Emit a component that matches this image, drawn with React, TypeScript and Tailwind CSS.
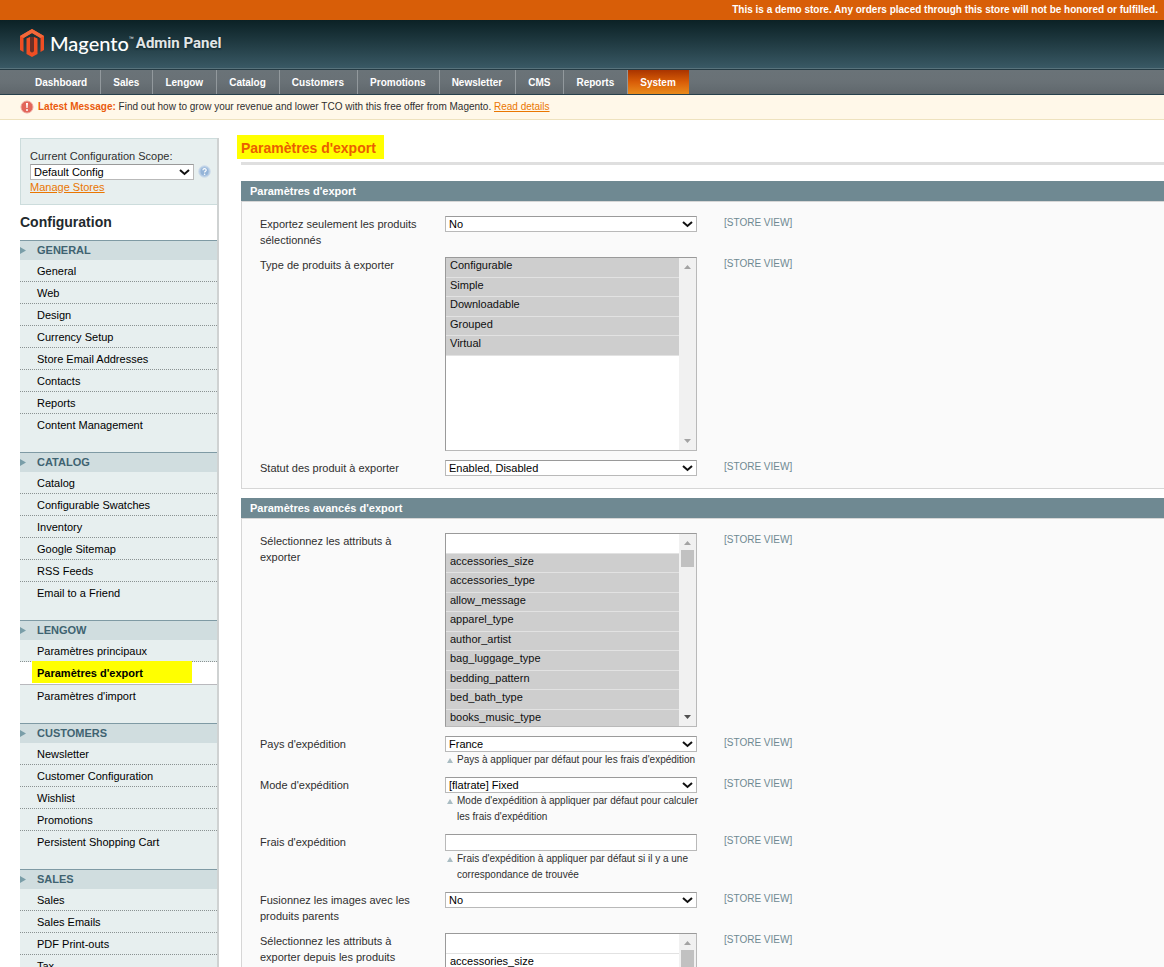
import type { ReactNode } from 'react'

const NAV = [
  'Dashboard',
  'Sales',
  'Lengow',
  'Catalog',
  'Customers',
  'Promotions',
  'Newsletter',
  'CMS',
  'Reports',
  'System',
]

const GROUPS = [
  {
    title: 'General',
    items: [
      'General',
      'Web',
      'Design',
      'Currency Setup',
      'Store Email Addresses',
      'Contacts',
      'Reports',
      'Content Management',
    ],
  },
  {
    title: 'Catalog',
    items: [
      'Catalog',
      'Configurable Swatches',
      'Inventory',
      'Google Sitemap',
      'RSS Feeds',
      'Email to a Friend',
    ],
  },
  {
    title: 'Lengow',
    items: ['Paramètres principaux', "Paramètres d'export", "Paramètres d'import"],
  },
  {
    title: 'Customers',
    items: [
      'Newsletter',
      'Customer Configuration',
      'Wishlist',
      'Promotions',
      'Persistent Shopping Cart',
    ],
  },
  {
    title: 'Sales',
    items: ['Sales', 'Sales Emails', 'PDF Print-outs', 'Tax'],
  },
]

const ACTIVE_ITEM = "Paramètres d'export"

const PRODUCT_TYPES = ['Configurable', 'Simple', 'Downloadable', 'Grouped', 'Virtual']

const ATTRIBUTES = [
  'accessories_size',
  'accessories_type',
  'allow_message',
  'apparel_type',
  'author_artist',
  'bag_luggage_type',
  'bedding_pattern',
  'bed_bath_type',
  'books_music_type',
]

export default function App() {
  return (
    <div className="h-screen overflow-hidden bg-white font-['Liberation_Sans',Arial,sans-serif] text-[11px] leading-4 text-[#2f2f2f]">
      <p className="h-5 bg-[#d85e08] px-[6px] text-right text-[10px] font-bold leading-5 text-white">
        This is a demo store. Any orders placed through this store will not be
        honored or fulfilled.
      </p>
      <Header />
      <Nav />
      <div className="flex h-[25px] items-center border-b border-[#eee2be] bg-[#fff8e9] px-5 text-[10px]">
        <AlertIcon />
        <p className="ml-1">
          <strong className="text-[#ea5b0c]">Latest Message:</strong> Find out how
          to grow your revenue and lower TCO with this free offer from Magento.{' '}
          <a href="#details" className="text-[#ea7601] underline">
            Read details
          </a>
        </p>
      </div>
      <div className="flex pl-5 pt-[18px]">
        <Sidebar />
        <main className="ml-[22px] min-w-0 flex-1">
          <div className="border-b-[3px] border-[#dfdfdf] pb-[3px]">
            <h1 className="-ml-1 -mt-[3px] inline-block bg-[#ff0] pl-1 pr-2 pt-[2px] align-top text-[14px] font-bold leading-[22px] text-[#eb5e00]">
              Paramètres d'export
            </h1>
          </div>
          <ExportSettings />
          <AdvancedSettings />
        </main>
      </div>
    </div>
  )
}

function Header() {
  return (
    <header className="flex h-[50px] items-center border-b border-[#253c45] bg-gradient-to-b from-[#0b2125] to-[#3a5a66] px-5 pb-[3px] shadow-[inset_0_-1px_0_#58737c]">
      <a href="#home" className="flex items-center" aria-label="Magento Admin Panel">
        <svg width="24" height="28" viewBox="0 0 24 28" aria-hidden="true">
          <path
            d="M12 0 0 7v14l3.500 2V9L12 4l8.500 5v14L24 21V7z"
            fill="#f04e23"
          />
          <path d="M12 0 0 7l3.500 2L12 4l8.500 5L24 7z" fill="#f2683a" />
          <path
            d="M6.500 9.500 10 8v14l2 1.500 2-1.500V8l3.500 1.500V25L12 28l-5.500-3z"
            fill="#f04e23"
          />
          <path d="M10 8v14l2 1.500 2-1.500V8" fill="#6b2f26" />
        </svg>
        <span className="ml-[6px] font-['Lato',sans-serif] text-[20px] font-medium leading-7 text-white">
          Magento
        </span>
        <span className="self-start text-[5px] leading-[18px] text-white">™</span>
        <span className="ml-[2px] font-['Roboto',sans-serif] text-[15px] font-bold leading-7 text-[#e2e6e7] [text-shadow:0_1px_2px_#0b2125]">
          Admin Panel
        </span>
      </a>
    </header>
  )
}

function Nav() {
  return (
    <nav className="flex h-[25px] border-b border-[#26404c] bg-gradient-to-b from-[#6a7378] via-[#697176] to-[#5f676c] pl-[23px] text-[10px] font-bold text-white">
      {NAV.map((label) =>
        label === 'System' ? (
          <a
            key={label}
            href="#system"
            aria-current="page"
            className="bg-gradient-to-b from-[#a93400] via-[#d95d08] to-[#e98b1b] pl-3 pr-[13px] leading-[25px]"
          >
            {label}
          </a>
        ) : (
          <a
            key={label}
            href="#section"
            className="border-r border-[#92999d] pl-3 pr-[13px] leading-[25px]"
          >
            {label}
          </a>
        ),
      )}
    </nav>
  )
}

function Sidebar() {
  return (
    <aside className="w-[199px] shrink-0 border-r-2 border-[#cfd2d2]">
      <div className="h-[67px] border border-r-0 border-[#ccdcdc] bg-[#e7efef] pl-[9px] pt-[9px]">
        <label htmlFor="scope" className="block">
          Current Configuration Scope:
        </label>
        <div className="flex h-[15px] items-center">
          <Dropdown id="scope" value="Default Config" width="w-[164px]" />
          <HelpIcon />
        </div>
        <a href="#stores" className="block text-[#ea7601] underline">
          Manage Stores
        </a>
      </div>
      <h3 className="h-[35px] text-[14px] font-bold leading-[34px] text-[#1f2a2e]">
        Configuration
      </h3>
      {GROUPS.map((group) => (
        <dl key={group.title} className="bg-[#e7efef] pb-4">
          <dt className="relative h-5 border-t border-[#7f9aa4] bg-[#d0dddf] pl-[17px] font-bold uppercase leading-[19px] text-[#3f6371]">
            <svg
              width="6"
              height="7"
              viewBox="0 0 6 7"
              className="absolute left-0 top-[6px]"
              aria-hidden="true"
            >
              <path d="M0 0 6 3.500 0 7z" fill="#7a9ea8" />
            </svg>
            {group.title}
          </dt>
          {group.items.map((item, i) => (
            <SidebarItem
              key={item}
              label={item}
              last={i === group.items.length - 1}
            />
          ))}
        </dl>
      ))}
    </aside>
  )
}

function SidebarItem({ label, last }: { label: string; last: boolean }) {
  if (label === ACTIVE_ITEM) {
    return (
      <dd className="relative h-[23px] border-b border-[#b9b9bd] bg-white text-black">
        <span className="absolute -top-px left-3 h-[22px] w-40 bg-[#ff0]" />
        <a href="#config" className="relative block pl-[17px] font-bold leading-[22px]">
          {label}
        </a>
      </dd>
    )
  }
  return (
    <dd
      className={
        last
          ? 'h-[22px] text-black'
          : 'h-[22px] border-b border-dotted border-[#8a9292] text-black'
      }
    >
      <a href="#config" className="block pl-[17px] leading-[22px]">
        {label}
      </a>
    </dd>
  )
}

function ExportSettings() {
  return (
    <Fieldset title="Paramètres d'export" className="mt-4">
      <Row id="only-selected" label="Exportez seulement les produits sélectionnés">
        <Dropdown id="only-selected" value="No" width="w-full" />
      </Row>
      <Row id="product-types" label="Type de produits à exporter">
        <ListBox id="product-types" options={PRODUCT_TYPES} selected={PRODUCT_TYPES} />
      </Row>
      <Row id="product-status" label="Statut des produit à exporter">
        <Dropdown id="product-status" value="Enabled, Disabled" width="w-full" />
      </Row>
    </Fieldset>
  )
}

function AdvancedSettings() {
  return (
    <Fieldset title="Paramètres avancés d'export" className="mt-[9px]">
      <Row id="attributes" label="Sélectionnez les attributs à exporter">
        <ListBox
          id="attributes"
          options={['', ...ATTRIBUTES]}
          selected={ATTRIBUTES}
          scrollable
        />
      </Row>
      <Row
        id="country"
        label="Pays d'expédition"
        note="Pays à appliquer par défaut pour les frais d'expédition"
      >
        <Dropdown id="country" value="France" width="w-full" />
      </Row>
      <Row
        id="carrier"
        label="Mode d'expédition"
        note="Mode d'expédition à appliquer par défaut pour calculer les frais d'expédition"
      >
        <Dropdown id="carrier" value="[flatrate] Fixed" width="w-full" />
      </Row>
      <Row
        id="shipping-price"
        label="Frais d'expédition"
        note="Frais d'expédition à appliquer par défaut si il y a une correspondance de trouvée"
      >
        <input
          id="shipping-price"
          type="text"
          className="block h-[17px] w-full border border-[#b9b9b9] border-t-[#9a9a9a] bg-white px-1"
        />
      </Row>
      <Row id="merge-images" label="Fusionnez les images avec les produits parents">
        <Dropdown id="merge-images" value="No" width="w-full" />
      </Row>
      <Row
        id="parent-attributes"
        label="Sélectionnez les attributs à exporter depuis les produits"
      >
        <ListBox
          id="parent-attributes"
          options={['', ...ATTRIBUTES]}
          selected={[]}
          scrollable
        />
      </Row>
    </Fieldset>
  )
}

type FieldsetProps = { title: string; className: string; children: ReactNode }

function Fieldset({ title, className, children }: FieldsetProps) {
  return (
    <section className={className}>
      <h2 className="h-5 bg-[#6f8992] pl-[9px] font-bold leading-5 text-white">
        {title}
      </h2>
      <div className="space-y-[9px] border border-r-0 border-[#d6d6d6] bg-[#fafafa] pb-3 pl-[18px] pt-[14px]">
        {children}
      </div>
    </section>
  )
}

type RowProps = { id: string; label: string; note?: string; children: ReactNode }

function Row({ id, label, note, children }: RowProps) {
  return (
    <div className="flex items-start">
      <div className="w-[185px] shrink-0 pr-5">
        <label htmlFor={id} className="block">
          {label}
        </label>
      </div>
      <div className="w-[252px] shrink-0">
        {children}
        {note && (
          <p className="relative -mr-3 pl-3 text-[10px]">
            <svg
              width="6"
              height="5"
              viewBox="0 0 6 5"
              className="absolute left-[2px] top-[6px]"
              aria-hidden="true"
            >
              <path d="M3 0 6 5H0z" fill="#a9bcc2" />
            </svg>
            {note}
          </p>
        )}
      </div>
      <span className="ml-[27px] text-[10px] leading-[14px] text-[#6f8992]">
        [STORE VIEW]
      </span>
    </div>
  )
}

function Dropdown({ id, value, width }: { id: string; value: string; width: string }) {
  return (
    <div className={`relative h-4 ${width}`}>
      <select
        id={id}
        defaultValue={value}
        className="block h-4 w-full appearance-none border border-[#b9b9b9] border-t-[#9a9a9a] bg-white pl-[3px] leading-[14px] text-black"
      >
        <option>{value}</option>
      </select>
      <svg
        width="11"
        height="7"
        viewBox="0 0 11 7"
        className="pointer-events-none absolute right-1 top-[5px]"
        aria-hidden="true"
      >
        <path d="m1 1 4.500 4L10 1" fill="none" stroke="#111" strokeWidth="2" />
      </svg>
    </div>
  )
}

type ListBoxProps = {
  id: string
  options: string[]
  selected: string[]
  scrollable?: boolean
}

function ListBox({ id, options, selected, scrollable }: ListBoxProps) {
  return (
    <div className="flex h-[194px] border border-[#b9b9b9] border-l-[#9a9a9a] border-t-[#9a9a9a] bg-white">
      <select
        id={id}
        multiple
        size={10}
        defaultValue={selected}
        className="block h-full min-w-0 flex-1 overflow-y-auto border-0 bg-white p-0 text-black [scrollbar-width:none]"
      >
        {options.map((option) => (
          <option
            key={option}
            value={option}
            className="h-[19px] border-b border-[#e2e2e2] px-1 pb-0 pt-px odd:h-5"
          >
            {option}
          </option>
        ))}
      </select>
      <div className="flex w-[17px] flex-col items-center bg-[#f1f1f1] py-[7px]">
        <ScrollArrow up color="#a3a3a3" />
        {scrollable && <span className="mt-[5px] h-[17px] w-[13px] bg-[#c1c1c1]" />}
        <span className="flex-1" />
        <ScrollArrow color={scrollable ? '#505050' : '#a3a3a3'} />
      </div>
    </div>
  )
}

function ScrollArrow({ up, color }: { up?: boolean; color: string }) {
  return (
    <svg width="7" height="4" viewBox="0 0 7 4" aria-hidden="true">
      <path d={up ? 'M3.500 0 7 4H0z' : 'M3.500 4 0 0h7z'} fill={color} />
    </svg>
  )
}

function AlertIcon() {
  return (
    <svg width="14" height="14" viewBox="0 0 14 14" aria-hidden="true">
      <circle cx="7" cy="7" r="6" fill="#e2665a" stroke="#efa59c" />
      <path d="M6 3h2l-.4 5H6.400z" fill="#fff" />
      <circle cx="7" cy="10" r="1" fill="#fff" />
    </svg>
  )
}

function HelpIcon() {
  return (
    <svg
      width="13"
      height="13"
      viewBox="0 0 13 13"
      className="ml-1"
      aria-hidden="true"
    >
      <circle cx="6.500" cy="6.500" r="5.800" fill="#b4cbe4" stroke="#cfddec" />
      <circle cx="6.500" cy="6.500" r="4" fill="#94b4d8" />
      <path
        d="M4.900 5.200c0-2 3.300-2 3.300 0 0 1.100-1.600 1.200-1.600 2.400"
        fill="none"
        stroke="#fff"
        strokeWidth="1.200"
      />
      <circle cx="6.600" cy="9.200" r=".8" fill="#fff" />
    </svg>
  )
}
